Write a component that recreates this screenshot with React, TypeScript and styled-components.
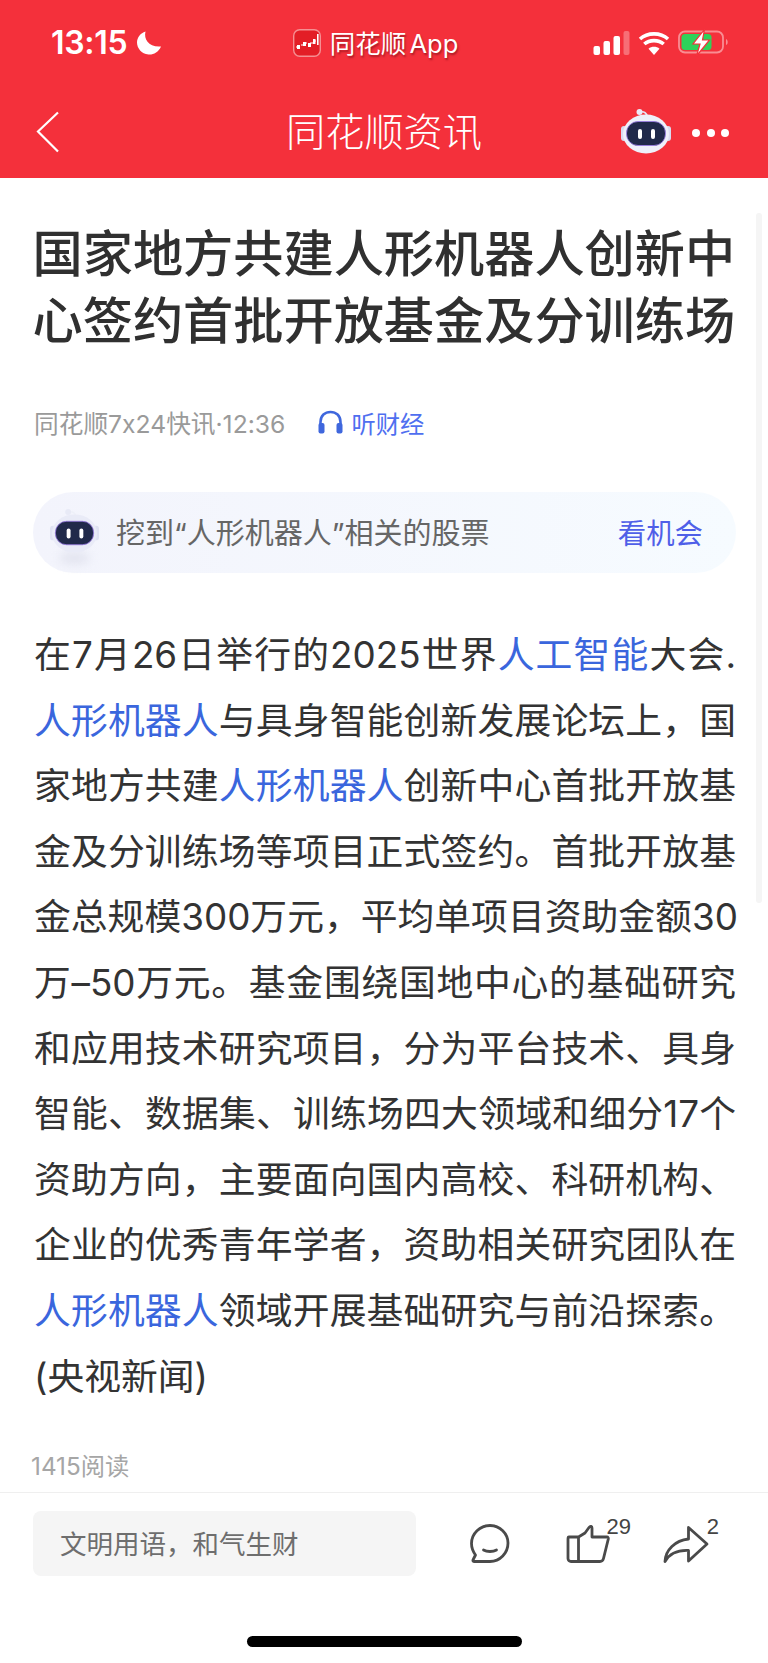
import React from 'react';
import styled, { createGlobalStyle } from 'styled-components';

const GlobalStyle = createGlobalStyle`
  html, body {
    margin: 0;
    padding: 0;
    background: #fff;
  }
  body {
    font-family: "Inter", "Noto Sans CJK SC", sans-serif;
    font-feature-settings: "calt" 0;
  }
`;

const Page = styled.div`
  position: relative;
  width: 768px;
  height: 1663px;
  overflow: hidden;
  display: flex;
  flex-direction: column;
  background: #fff;
`;

const Header = styled.header`
  height: 178px;
  background: #f4303b;
  color: #fff;
  flex-shrink: 0;
`;

const StatusBar = styled.div`
  height: 85px;
  display: grid;
  grid-template-columns: 1fr auto 1fr;
  align-items: center;
  padding: 0 38px 0 51px;
`;

const TimeGroup = styled.div`
  display: flex;
  align-items: center;
  gap: 9px;
`;

const Time = styled.span`
  font-size: 32px;
  font-weight: 600;
  letter-spacing: -0.3px;
`;

const AppBadge = styled.div`
  display: flex;
  align-items: center;
  gap: 9px;
  margin-right: 30px;
  font-size: 25.5px;
  word-spacing: -4px;
  text-shadow: 1px 2px 2px rgba(110, 10, 20, 0.55);
`;

const AppName = styled.span`
  margin-top: -3px;
`;

const StatusIcons = styled.div`
  display: flex;
  align-items: center;
  justify-content: flex-end;
  gap: 8px;
`;

const NavBar = styled.div`
  height: 93px;
  display: grid;
  grid-template-columns: 1fr auto 1fr;
  align-items: center;
  padding: 0 36px;
`;

const NavTitle = styled.div`
  font-size: 39.2px;
  font-weight: 300;
  line-height: 1;
`;

const NavActions = styled.div`
  display: flex;
  align-items: center;
  justify-content: flex-end;
  gap: 21px;
  margin-right: 3px;
`;

const NavRobot = styled.div`
  display: flex;
  margin-top: 5px;
`;

const Dots = styled.div`
  display: flex;
  gap: 6.5px;
  margin-top: 3px;
`;

const Dot = styled.span`
  width: 8px;
  height: 8px;
  border-radius: 50%;
  background: #fff;
`;

const Content = styled.main`
  flex: 1;
  padding: 42px 32px 0 34px;
`;

const Title = styled.h1`
  margin: 0 0 0 -1.5px;
  font-size: 50.2px;
  font-weight: 500;
  line-height: 67px;
  color: #303030;
  white-space: nowrap;
`;

const Meta = styled.div`
  margin-top: 50px;
  height: 36px;
  display: flex;
  align-items: center;
  font-size: 24.7px;
  color: #9a9a9a;
`;

const Listen = styled.span`
  margin-left: 33px;
  display: flex;
  align-items: center;
  gap: 8px;
  font-size: 24.3px;
  color: #4f6ff0;
`;

const Pill = styled.div`
  margin-top: 52px;
  margin-left: -1px;
  height: 81px;
  border-radius: 41px;
  display: flex;
  align-items: center;
  padding: 0 33px 0 17px;
  background: linear-gradient(90deg, #f3f4fc 0%, #f6fbff 100%);
`;

const PillRobot = styled.div`
  display: flex;
  margin-top: 1px;
`;

const PillText = styled.span`
  margin: -3px 0 0 17px;
  flex: 1;
  font-size: 29px;
  color: #666;
  white-space: nowrap;
`;

const PillLink = styled.span`
  margin-top: -2px;
  font-size: 28.4px;
  color: #4f5fe8;
`;

const Body = styled.div`
  margin-top: 49px;
  font-size: 36.8px;
  line-height: 65.6px;
  color: #333;
`;

const Line = styled.div<{ $last?: boolean }>`
  white-space: nowrap;
  text-align: justify;
  text-align-last: ${props => (props.$last ? 'left' : 'justify')};
  height: 65.6px;
`;

const Keyword = styled.span`
  color: #3a66dd;
`;

const Reads = styled.div`
  position: absolute;
  left: 31px;
  top: 1450px;
  font-size: 24.3px;
  line-height: 32px;
  color: #a6a6a6;
`;

const Footer = styled.footer`
  position: absolute;
  left: 0;
  right: 0;
  top: 1492px;
  height: 171px;
  border-top: 1px solid #efefef;
  box-sizing: border-box;
  padding: 18px 0 0 33px;
`;

const FooterRow = styled.div`
  display: flex;
  align-items: center;
`;

const CommentInput = styled.div`
  width: 383px;
  height: 65px;
  padding: 0 0 3px 27px;
  box-sizing: border-box;
  display: flex;
  align-items: center;
  background: #f5f5f5;
  border-radius: 8px;
  font-size: 26.5px;
  color: #6e6e6e;
`;

const Actions = styled.div`
  margin-left: 24px;
  display: flex;
  align-items: center;
`;

const Action = styled.div<{ $width: number }>`
  position: relative;
  width: ${props => props.$width}px;
  display: flex;
  justify-content: center;
`;

const ActionCount = styled.span<{ $right: number }>`
  position: absolute;
  top: -10px;
  right: ${props => props.$right}px;
  font-family: "Liberation Sans", sans-serif;
  font-size: 22px;
  color: #444;
`;

const HomeIndicator = styled.div`
  position: absolute;
  left: 247px;
  top: 1636px;
  width: 275px;
  height: 11px;
  border-radius: 6px;
  background: #000;
`;

const ScrollTrack = styled.div`
  position: absolute;
  left: 756px;
  top: 213px;
  width: 6px;
  height: 690px;
  border-radius: 3px;
  background: #f5f5f5;
`;

const Robot: React.FC<{ size: number; faded?: boolean }> = ({ size, faded }) => (
  <svg width={size} height={size} viewBox="0 0 50 50" style={{ overflow: 'visible' }}>
    {faded && (
      <ellipse cx="25" cy="50" rx="16" ry="7" fill="#d9dbe8" opacity="0.6" style={{ filter: 'blur(5px)' }} />
    )}
    <path d="M19 3 C23 2 26 4 27 9" fill="none" stroke={faded ? '#eef0f8' : '#e6e4f6'} strokeWidth="1.6" />
    <circle cx="18.5" cy="3" r="3" fill={faded ? '#e8eaf6' : '#eceaf8'} />
    <rect x="0" y="17" width="6" height="15" rx="3" fill={faded ? '#dfe2f2' : '#d9dbf0'} />
    <rect x="44" y="17" width="6" height="15" rx="3" fill={faded ? '#dfe2f2' : '#d9dbf0'} />
    <ellipse cx="25" cy="25" rx="23" ry="19.5" fill={faded ? '#e9ebf7' : '#eef0fa'} />
    <rect x="5.5" y="12.5" width="39" height="24" rx="11.5" fill="#20294a" stroke="#9b7be8" strokeWidth="0.8" />
    <rect x="17" y="20" width="4" height="10" rx="2" fill="#fff" />
    <rect x="30" y="20" width="4" height="10" rx="2" fill="#fff" />
  </svg>
);

const AppLogo = () => (
  <svg width="28" height="28" viewBox="0 0 28 28">
    <rect x="0.7" y="0.7" width="26.6" height="26.6" rx="6" fill="#e31e26" stroke="#f58f92" strokeWidth="1.4" />
    <path d="M3 18h3M8 16h3M11 14h3M17 14h3M20 12h3" stroke="#fff" strokeWidth="1.2" />
    <rect x="4" y="16" width="3" height="4" fill="#fff" />
    <rect x="10" y="13" width="3" height="4" fill="#fff" />
    <rect x="15" y="14" width="3" height="4" fill="#fff" />
    <rect x="20" y="10" width="2.5" height="5" fill="#fff" />
    <rect x="24" y="5" width="1.6" height="11" fill="#fff" />
  </svg>
);

const Moon = () => (
  <svg width="26" height="26" viewBox="0 0 26 26">
    <path d="M9.5 1.5 C7.5 9.5 13 17.5 25 16.5 C22.5 22.5 17 25 12.5 24.5 C5.5 24 1 18 1 12.5 C1 7.5 4.5 3 9.5 1.5Z" fill="#fff" />
  </svg>
);

const SignalBars = () => (
  <svg width="37" height="24" viewBox="0 0 36 24">
    <rect x="0" y="15" width="6.5" height="9" rx="2" fill="#fff" />
    <rect x="10" y="10" width="6.5" height="14" rx="2" fill="#fff" />
    <rect x="20" y="5" width="6.5" height="19" rx="2" fill="#fff" />
    <rect x="30" y="0" width="6" height="24" rx="2" fill="#ffffff" fillOpacity="0.3" />
  </svg>
);

const Wifi = () => (
  <svg width="32" height="24" viewBox="0 0 32 24">
    <path d="M16 24 L10.5 17.8 C13.5 15.2 18.5 15.2 21.5 17.8Z" fill="#fff" />
    <path d="M6.3 13 C11.5 8.5 20.5 8.5 25.7 13" fill="none" stroke="#fff" strokeWidth="3.6" />
    <path d="M2 8 C9.5 1.2 22.5 1.2 30 8" fill="none" stroke="#fff" strokeWidth="3.6" />
  </svg>
);

const Battery = () => (
  <svg width="52" height="28" viewBox="0 0 52 28">
    <rect x="1" y="2.5" width="44" height="21" rx="6" fill="none" stroke="#fff" strokeOpacity="0.45" strokeWidth="1.8" />
    <rect x="3.5" y="5" width="30" height="16" rx="3.5" fill="#2fd15a" />
    <path d="M48 10 C50 10.5 50.5 15.5 48 16Z" fill="#fff" fillOpacity="0.45" />
    <path d="M26.5 0.5 L15 15 H22 L18.5 27 L31.5 11 H24.5Z" fill="#fff" stroke="#f4303b" strokeWidth="1.2" />
  </svg>
);

const BackArrow = () => (
  <svg width="24" height="42" viewBox="0 0 24 42">
    <path d="M22 1.5 L2 20.5 L22 40.5" fill="none" stroke="#fff" strokeWidth="2.2" />
  </svg>
);

const Headphones = () => (
  <svg width="25" height="24" viewBox="0 0 25 24">
    <path d="M2.5 16 V12 C2.5 5.5 7 2 12.5 2 C18 2 22.5 5.5 22.5 12 V16" fill="none" stroke="#3f67dd" strokeWidth="2.6" />
    <rect x="0.5" y="13" width="6" height="10.5" rx="2" fill="#3f67dd" />
    <rect x="18.5" y="13" width="6" height="10.5" rx="2" fill="#3f67dd" />
  </svg>
);

const CommentIcon = () => (
  <svg width="42" height="42" viewBox="0 0 42 42">
    <path
      d="M21 2.5 C31 2.5 39 10.5 39 20 C39 30 31 38.5 21 38.5 L5 38.5 C4 38.5 3.5 37.5 4.2 36.5 L6.5 32 C4 28.5 2.5 24.5 2.5 20.5 C2.5 10.5 11 2.5 21 2.5Z"
      fill="none"
      stroke="#4a4a4a"
      strokeWidth="2.8"
      strokeLinejoin="round"
    />
    <path d="M14.5 27 C18 29 24 29 27.5 27" fill="none" stroke="#4a4a4a" strokeWidth="2.8" strokeLinecap="round" />
  </svg>
);

const ThumbIcon = () => (
  <svg width="44" height="40" viewBox="0 0 44 40">
    <path
      d="M3 13 H12.5 V37.5 H5 C3.5 37.5 2 36.5 2 34.5 V15 C2 14 2.5 13 3 13Z M12.5 13 L19 9 L23 3.5 C24.5 1.5 26 2.5 26 4 V13 H41 C42 13 42.5 14 42.3 15 L37.5 34.5 C37 36.5 35.5 37.5 34 37.5 H12.5"
      fill="none"
      stroke="#4a4a4a"
      strokeWidth="2.8"
      strokeLinejoin="round"
    />
  </svg>
);

const ShareIcon = () => (
  <svg width="46" height="40" viewBox="0 0 46 40">
    <path
      d="M2 37.5 C2.5 26 12 16.5 25.5 15 V3.5 L44 20 L25.5 37 V26.5 C15 26 7 29 2 37.5Z"
      fill="none"
      stroke="#4a4a4a"
      strokeWidth="2.8"
      strokeLinejoin="round"
    />
  </svg>
);

const App: React.FC = () => {
  return (
    <Page>
      <GlobalStyle />
      <Header>
        <StatusBar>
          <TimeGroup>
            <Time>13:15</Time>
            <Moon />
          </TimeGroup>
          <AppBadge>
            <AppLogo />
            <AppName>同花顺 App</AppName>
          </AppBadge>
          <StatusIcons>
            <SignalBars />
            <Wifi />
            <Battery />
          </StatusIcons>
        </StatusBar>
        <NavBar>
          <BackArrow />
          <NavTitle>同花顺资讯</NavTitle>
          <NavActions>
            <NavRobot>
              <Robot size={50} />
            </NavRobot>
            <Dots>
              <Dot />
              <Dot />
              <Dot />
            </Dots>
          </NavActions>
        </NavBar>
      </Header>

      <Content>
        <Title>
          国家地方共建人形机器人创新中
          <br />
          心签约首批开放基金及分训练场
        </Title>
        <Meta>
          同花顺7x24快讯·12:36
          <Listen>
            <Headphones />
            听财经
          </Listen>
        </Meta>
        <Pill>
          <PillRobot>
            <Robot size={49} faded />
          </PillRobot>
          <PillText>挖到“人形机器人”相关的股票</PillText>
          <PillLink>看机会</PillLink>
        </Pill>
        <Body>
          <Line>在7月26日举行的2025世界<Keyword>人工智能</Keyword>大会.</Line>
          <Line><Keyword>人形机器人</Keyword>与具身智能创新发展论坛上，国</Line>
          <Line>家地方共建<Keyword>人形机器人</Keyword>创新中心首批开放基</Line>
          <Line>金及分训练场等项目正式签约。首批开放基</Line>
          <Line>金总规模300万元，平均单项目资助金额30</Line>
          <Line>万–50万元。基金围绕国地中心的基础研究</Line>
          <Line>和应用技术研究项目，分为平台技术、具身</Line>
          <Line>智能、数据集、训练场四大领域和细分17个</Line>
          <Line>资助方向，主要面向国内高校、科研机构、</Line>
          <Line>企业的优秀青年学者，资助相关研究团队在</Line>
          <Line><Keyword>人形机器人</Keyword>领域开展基础研究与前沿探索。</Line>
          <Line $last>(央视新闻)</Line>
        </Body>
      </Content>

      <ScrollTrack />
      <Reads>1415阅读</Reads>

      <Footer>
        <FooterRow>
          <CommentInput>文明用语，和气生财</CommentInput>
          <Actions>
            <Action $width={100}>
              <CommentIcon />
            </Action>
            <Action $width={96}>
              <ThumbIcon />
              <ActionCount $right={5}>29</ActionCount>
            </Action>
            <Action $width={100}>
              <ShareIcon />
              <ActionCount $right={17}>2</ActionCount>
            </Action>
          </Actions>
        </FooterRow>
      </Footer>
      <HomeIndicator />
    </Page>
  );
};

export default App;
